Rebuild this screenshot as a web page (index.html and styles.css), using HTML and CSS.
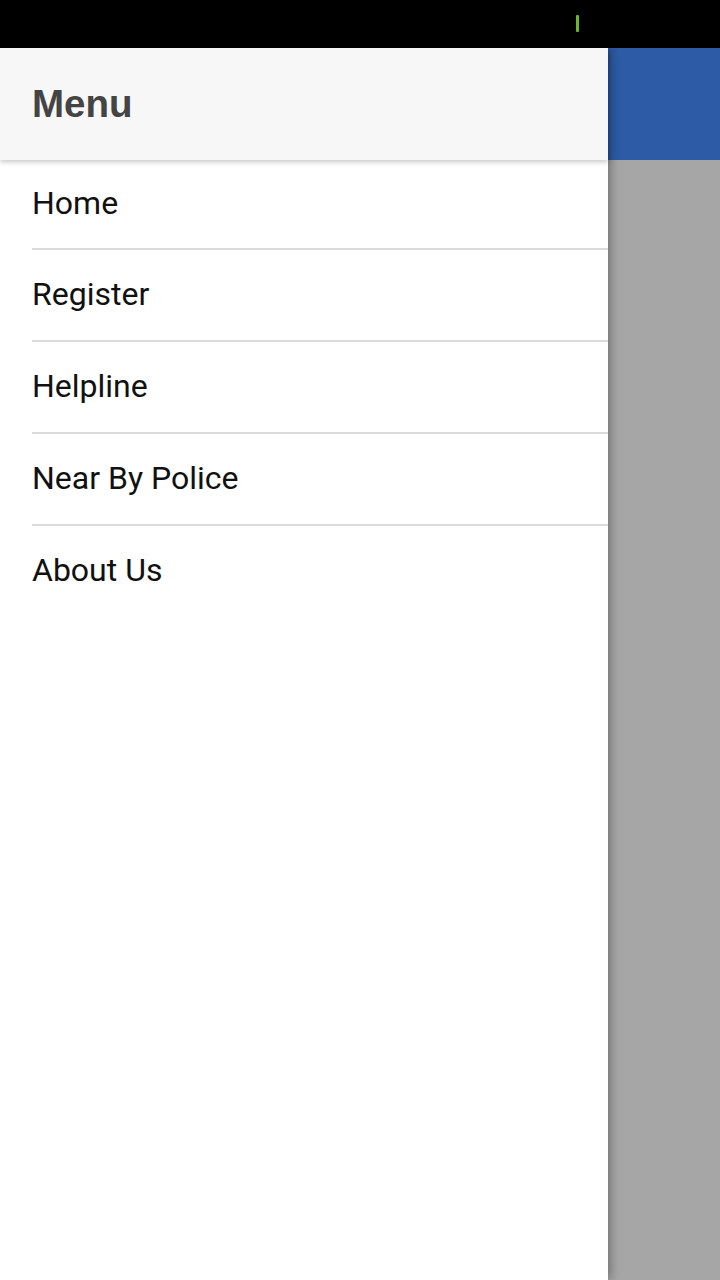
FILE: index.html
```html
<!DOCTYPE html>
<html>
<head>
<meta charset="utf-8">
<link rel="stylesheet" href="styles.css">
</head>
<body>
<div class="statusbar"><span class="signal"></span></div>
<div class="screen">
  <div class="backdrop">
    <div class="appbar"></div>
    <div class="scrim"></div>
  </div>
  <nav class="drawer">
    <header class="drawer-head">Menu</header>
    <ul class="menu">
      <li class="item">Home</li>
      <li class="item">Register</li>
      <li class="item">Helpline</li>
      <li class="item">Near By Police</li>
      <li class="item">About Us</li>
    </ul>
  </nav>
</div>
</body>
</html>
```
FILE: styles.css
```css
* { box-sizing: border-box; }
html, body { margin: 0; padding: 0; width: 720px; height: 1280px; overflow: hidden; background: #fff; }
body { font-family: Roboto, "Noto Sans", sans-serif; }
.statusbar {
  height: 48px;
  background: #000;
  position: relative;
}
.signal {
  position: absolute;
  left: 576px;
  top: 15px;
  width: 3px;
  height: 17px;
  background: #6fb52c;
  border-radius: 1px;
}
.screen {
  position: relative;
  height: 1232px;
}
.backdrop {
  height: 100%;
  display: flex;
  flex-direction: column;
}
.appbar { height: 112px; background: #2d5ba6; flex: none; }
.scrim { flex: 1; background: #a6a6a6; }
.drawer {
  position: absolute;
  left: 0;
  top: 0;
  width: 608px;
  height: 100%;
  background: #fff;
  box-shadow: 2px 0 10px rgba(0,0,0,0.35);
}
.drawer-head {
  height: 112px;
  background: #f7f7f7;
  display: flex;
  align-items: center;
  padding-left: 32px;
  font-family: "Liberation Sans", Arial, sans-serif;
  font-weight: bold;
  font-size: 38.5px;
  color: #444;
  position: relative;
  z-index: 1;
  box-shadow: 0 2px 5px rgba(0,0,0,0.22);
}
.menu {
  list-style: none;
  margin: 0;
  padding: 0 0 0 32px;
}
.item {
  height: 92px;
  border-top: 2px solid #dadada;
  display: flex;
  align-items: center;
  font-size: 32px;
  color: #111;
  padding-bottom: 2px;
}
.item:first-child {
  height: 88px;
  border-top: none;
}
```
